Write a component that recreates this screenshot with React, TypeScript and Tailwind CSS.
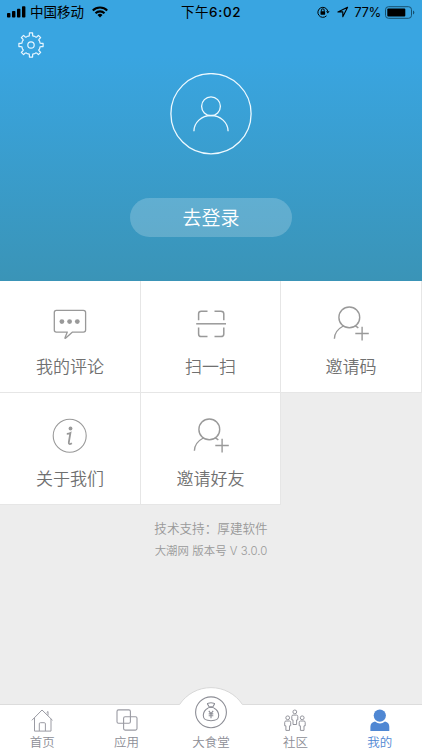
import type { ReactNode } from "react";

function GearIcon() {
  const teeth: string[] = [];
  for (let i = 0; i < 8; i++) {
    const a = (i * Math.PI) / 4 - Math.PI / 2;
    const at = (r: number, d: number) =>
      `${(13 + r * Math.cos(a + d)).toFixed(2)} ${(13 + r * Math.sin(a + d)).toFixed(2)}`;
    teeth.push(
      `${i === 0 ? "M" : "L"}${at(12.2, -0.13)}L${at(12.2, 0.13)}L${at(10.2, 0.16)}Q${at(8.6, 0.2)} ${at(9.4, 0.3)}L${at(9.4, 0.485)}Q${at(8.6, 0.585)} ${at(10.2, 0.625)}`
    );
  }
  return (
    <svg width="26" height="26" viewBox="0 0 26 26" fill="none" stroke="#e8f6ff" strokeWidth="1.2" strokeLinejoin="round">
      <path d={teeth.join("") + "Z"} />
      <circle cx="13" cy="13" r="3.2" />
    </svg>
  );
}

function StatusBar() {
  return (
    <div className="flex h-6 items-center text-black">
      <div className="flex w-[180px] items-center pl-[7px]">
        <svg width="19" height="12" viewBox="0 0 19 12">
          <rect x="0" y="7" width="3.4" height="4.5" rx="0.8" />
          <rect x="5" y="5" width="3.4" height="6.5" rx="0.8" />
          <rect x="10" y="2.8" width="3.4" height="8.7" rx="0.8" />
          <rect x="15" y="0.3" width="3.4" height="11.2" rx="0.8" />
        </svg>
        <span className="ml-[4px] pt-px text-[13.5px] leading-[23px]">中国移动</span>
        <svg className="ml-[8px]" width="16" height="12" viewBox="0 0 16 12" fill="none" stroke="#000" strokeWidth="2.1">
          <path d="M0.8 4.4A10.3 10.3 0 0 1 15.2 4.4" />
          <path d="M3.5 7.2A6.5 6.5 0 0 1 12.5 7.2" />
          <path d="M8 11.6L5.5 9A3.6 3.6 0 0 1 10.5 9Z" fill="#000" stroke="none" />
        </svg>
      </div>
      <div className="flex w-[62px] items-center justify-center whitespace-nowrap font-['Inter','Noto_Sans_CJK_SC',sans-serif] text-[13.5px] leading-6 tracking-[0.6px]">
        <span>下午</span>
        <span className="font-medium">6:02</span>
      </div>
      <div className="flex flex-1 items-center justify-end pr-[7px]">
        <svg width="13" height="12" viewBox="0 0 13 12" fill="none" stroke="#000" strokeWidth="1">
          <path d="M9.5 9.8A5 5 0 1 1 10.7 5" />
          <path d="M9 5.2H12.6L10.8 7.5Z" fill="#000" stroke="none" />
          <rect x="3.5" y="5.2" width="4.6" height="3.5" rx="0.4" fill="#000" stroke="none" />
          <path d="M4.4 5.5V4.2A1.4 1.4 0 0 1 7.2 4.2V5.5" />
        </svg>
        <svg className="ml-[7px]" width="12" height="12" viewBox="0 0 12 12" fill="none" stroke="#000" strokeWidth="1.1" strokeLinejoin="round">
          <path d="M10.6 1.2L0.9 5.9H5.8V10.8Z" />
        </svg>
        <span className="ml-[5px] font-['Inter','Liberation_Sans',sans-serif] text-[13px] leading-6 tracking-[-0.3px]">77%</span>
        <svg className="ml-[4px]" width="30" height="13" viewBox="0 0 30 13">
          <rect x="0.5" y="0.7" width="26" height="11.6" rx="3" fill="none" stroke="#17506f" strokeWidth="1" />
          <rect x="2.3" y="2.4" width="18" height="8.2" rx="1" />
          <path d="M28 4.5Q29.3 5 29.3 6.5T28 8.5Z" fill="#17506f" />
        </svg>
      </div>
    </div>
  );
}

function CommentIcon() {
  return (
    <svg width="48" height="48" viewBox="0 0 48 48" fill="none" stroke="#999" strokeWidth="1.3" strokeLinejoin="round">
      <path d="M10.3 10.4H37.4Q39.6 10.4 39.6 12.6V30Q39.6 32.1 37.4 32.1H26.5L19.5 38.2Q18.8 38.6 19 37.8L21.3 32.1H10.3Q8.3 32.1 8.3 30V12.6Q8.3 10.4 10.3 10.4Z" />
      <g fill="#999" stroke="none">
        <circle cx="15.9" cy="21.6" r="2.4" />
        <circle cx="23.6" cy="21.6" r="2.4" />
        <circle cx="31.3" cy="21.6" r="2.4" />
      </g>
    </svg>
  );
}

function ScanIcon() {
  return (
    <svg width="48" height="48" viewBox="0 0 48 48" fill="none" stroke="#999" strokeWidth="1.5">
      <path d="M20.5 11.2H14.2Q11.6 11.2 11.6 13.8V20.2" />
      <path d="M27.5 11.2H33.8Q36.8 11.2 36.8 13.8V20.2" />
      <path d="M20.5 36.6H14.2Q11.6 36.6 11.6 34V27.5" />
      <path d="M27.5 36.6H33.8Q36.8 36.6 36.8 34V27.5" />
      <path d="M9.2 23.8H39" />
    </svg>
  );
}

function InviteIcon() {
  return (
    <svg width="48" height="48" viewBox="0 0 48 48" fill="none" stroke="#999" strokeWidth="1.4">
      <circle cx="22.3" cy="17.4" r="10.4" />
      <path d="M16.3 26Q7.6 30.6 7.4 38.7" />
      <path d="M28.3 26Q30.1 26.6 31.3 28" />
      <path d="M28.3 33.5H41.8M35.1 26.8V40.4" />
    </svg>
  );
}

function InfoIcon() {
  return (
    <svg width="48" height="48" viewBox="0 0 48 48" fill="none" stroke="#999" strokeWidth="1.1">
      <circle cx="23.7" cy="23.8" r="16.5" />
      <circle cx="24.5" cy="16.5" r="1.9" fill="#999" stroke="none" />
      <path d="M20.8 21.8Q23 21.8 24.4 21L22.8 30.4Q22.5 33.2 25.9 31.2" strokeWidth="1.8" />
    </svg>
  );
}

function Cell({ icon, label }: { icon: ReactNode; label: string }) {
  return (
    <div className="flex flex-col items-center border-b border-r border-[#e6e6e6] bg-white pt-[19px]">
      {icon}
      <span className="mt-[8px] text-[17px] font-[350] leading-6 text-[#707070]">{label}</span>
    </div>
  );
}

function HomeIcon() {
  return (
    <svg width="32" height="30" viewBox="0 0 32 30" fill="none" stroke="#9a9ba3" strokeWidth="1">
      <path d="M5.9 14.3L16 4L26.5 14.3" />
      <path d="M8.5 12V25.1H25V12.8" />
      <path d="M13.3 25V17.8Q13.3 16.7 14.4 16.7H18.3Q19.4 16.7 19.4 17.8V25" />
      <path d="M20.6 6.8L22 5.5V9.5" />
    </svg>
  );
}

function AppsIcon() {
  return (
    <svg width="32" height="30" viewBox="0 0 32 30" fill="none" stroke="#9a9ba3" strokeWidth="1.1">
      <rect x="6" y="3.9" width="13.4" height="13.3" rx="1.5" />
      <rect x="12.6" y="10.8" width="13.4" height="13.3" rx="1.5" />
    </svg>
  );
}

function CommunityIcon() {
  const person = (
    <>
      <circle cx="0" cy="0" r="1.9" />
      <path d="M-1.8 3.2H1.8Q3 3.3 3 4.5V8H1.8V12.6H-1.8V8H-3V4.5Q-3 3.3 -1.8 3.2Z" />
    </>
  );
  return (
    <svg width="32" height="30" viewBox="0 0 32 30" fill="none" stroke="#94959d" strokeWidth="1" strokeLinejoin="round">
      <g transform="translate(15.8 5.9)">{person}</g>
      <g transform="translate(8.7 11.8)">{person}</g>
      <g transform="translate(23.2 11.8)">{person}</g>
    </svg>
  );
}

function MeIcon() {
  return (
    <svg width="32" height="30" viewBox="0 0 32 30" fill="#4f87d3">
      <circle cx="15.8" cy="9.6" r="6.1" />
      <path d="M11 15.6Q16 19.3 21 15.6Q25.2 16.6 25.3 20.8V25H6.4V20.8Q6.5 16.6 11 15.6Z" />
    </svg>
  );
}

function MoneyBagIcon() {
  return (
    <svg width="34" height="34" viewBox="0 0 34 34" fill="none" stroke="#8d8e96" strokeWidth="1.1">
      <circle cx="17" cy="17.3" r="15.4" />
      <path d="M14.8 11.2L13.5 9Q13.4 8.3 14.2 8.2Q17 7.4 19.8 8.2Q20.6 8.3 20.5 9L19.2 11.2" />
      <path d="M14.3 12.1H19.7" strokeWidth="1.7" />
      <path d="M14.3 13C11.5 14.4 9.3 17.5 9.3 20.6C9.3 25 12.3 25.7 17 25.7S24.7 25 24.7 20.6C24.7 17.5 22.5 14.4 19.7 13" />
      <path d="M14.8 15.8L17 18.7L19.2 15.8M14.7 18.9H19.3M14.7 20.8H19.3M17 18.5V23.2" />
    </svg>
  );
}

function Tab({ icon, label, active = false }: { icon: ReactNode; label: string; active?: boolean }) {
  return (
    <div className="flex flex-1 flex-col items-center pt-px">
      {icon}
      <span className={`text-[12.5px] font-[350] leading-[14px] ${active ? "text-[#4f87d3]" : "text-[#8d8e96]"}`}>{label}</span>
    </div>
  );
}

export default function App() {
  return (
    <div className="flex h-[750px] w-[422px] flex-col overflow-hidden bg-[#ededed] font-['Liberation_Sans','Noto_Sans_CJK_SC',sans-serif]">
      <header className="flex h-[281px] flex-col bg-linear-to-b from-[#39a5e1] from-20% to-[#3a94b7]">
        <StatusBar />
        <div className="h-[49px] pl-[17.5px] pt-[8px]">
          <GearIcon />
        </div>
        <div className="flex flex-col items-center">
          <svg width="82" height="82" viewBox="0 0 82 82" fill="none" stroke="#edf9ff" strokeWidth="1.3">
            <circle cx="41" cy="40.7" r="40.1" />
            <circle cx="41" cy="33.3" r="9.4" />
            <path d="M23.9 58.3A17.1 15.8 0 0 1 58.1 58.3" />
          </svg>
          <button className="mt-[43px] h-[39px] w-[162px] rounded-full bg-white/20 pt-[3px] text-[19px] font-[350] text-white">
            去登录
          </button>
        </div>
      </header>

      <div className="grid grid-cols-[141px_140px_141px] grid-rows-[112px_112px]">
        <Cell icon={<CommentIcon />} label="我的评论" />
        <Cell icon={<ScanIcon />} label="扫一扫" />
        <Cell icon={<InviteIcon />} label="邀请码" />
        <Cell icon={<InfoIcon />} label="关于我们" />
        <Cell icon={<InviteIcon />} label="邀请好友" />
      </div>

      <div className="flex flex-1 flex-col items-center pt-[13px] text-[#999]">
        <p className="text-[12.6px] font-[350] leading-[22px]">技术支持：厚建软件</p>
        <p className="font-['Inter','Noto_Sans_CJK_SC',sans-serif] text-[11.4px] font-[350] leading-[22px] tracking-[0.05px]">大潮网 版本号 V 3.0.0</p>
      </div>

      <nav className="relative flex h-[46px] border-t border-[#dcdcdc] bg-white">
        <svg className="absolute left-[173px] top-[-19px]" width="76" height="22" viewBox="0 0 76 22">
          <path d="M6.5 18.6A37.7 37.7 0 0 1 69.5 18.6V22H6.5Z" fill="#fff" />
          <path d="M6.5 18.6A37.7 37.7 0 0 1 69.5 18.6" fill="none" stroke="#d8d8d8" strokeWidth="1" />
        </svg>
        <Tab icon={<HomeIcon />} label="首页" />
        <Tab icon={<AppsIcon />} label="应用" />
        <div className="relative flex flex-1 flex-col items-center">
          <div className="-mt-[10px] h-[34px]">
            <MoneyBagIcon />
          </div>
          <span className="mt-[7px] text-[12.5px] font-[350] leading-[14px] text-[#8d8e96]">大食堂</span>
        </div>
        <Tab icon={<CommunityIcon />} label="社区" />
        <Tab icon={<MeIcon />} label="我的" active />
      </nav>
    </div>
  );
}
